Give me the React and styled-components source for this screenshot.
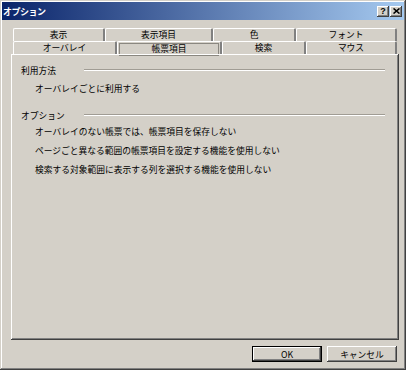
import styled, { createGlobalStyle } from "styled-components";

const GlobalStyle = createGlobalStyle`
  html, body {
    margin: 0;
    padding: 0;
    background: #fff;
  }
  body {
    font-family: "Noto Sans CJK JP", "Noto Sans", sans-serif;
    font-size: 8.75px;
    color: #000;
  }
`;

const raised = `
  box-shadow: inset -1px -1px #404040, inset 1px 1px #fff,
    inset -2px -2px #808080, inset 2px 2px #d4d0c8;
`;

const topTabs = [
    { label: "表示", width: 92 },
    { label: "表示項目", width: 108 },
    { label: "色", width: 83 },
    { label: "フォント", width: 101 },
];

const frontTabs = [
    { label: "オーバレイ", width: 104 },
    { label: "帳票項目", width: 105, active: true },
    { label: "検索", width: 84 },
    { label: "マウス", width: 91 },
];

const options = [
    "オーバレイのない帳票では、帳票項目を保存しない",
    "ページごと異なる範囲の帳票項目を設定する機能を使用しない",
    "検索する対象範囲に表示する列を選択する機能を使用しない",
];

function App() {
    return (
        <>
            <GlobalStyle />
            <Window>
                <TitleBar>
                    <Title>オプション</Title>
                    <TitleButtons>
                        <TitleButton>?</TitleButton>
                        <TitleButton>
                            <svg width="7" height="6" viewBox="0 0 7 6">
                                <path d="M0.5 0.5 L6.5 5.5 M6.5 0.5 L0.5 5.5" stroke="#000" strokeWidth="1.6" />
                            </svg>
                        </TitleButton>
                    </TitleButtons>
                </TitleBar>

                <Content>
                    <TabStrip>
                        <TabRow>
                            {topTabs.map((t) => (
                                <Tab key={t.label} width={t.width}>{t.label}</Tab>
                            ))}
                        </TabRow>
                        <TabRow>
                            {frontTabs.map((t) => (
                                <Tab key={t.label} width={t.width} active={t.active}>
                                    {t.active ? <Focus>{t.label}</Focus> : t.label}
                                </Tab>
                            ))}
                        </TabRow>
                    </TabStrip>

                    <Panel>
                        <GroupHeader>
                            <GroupLabel>利用方法</GroupLabel>
                            <Etch />
                        </GroupHeader>
                        <Item first>オーバレイごとに利用する</Item>

                        <GroupHeader gap>
                            <GroupLabel>オプション</GroupLabel>
                            <Etch />
                        </GroupHeader>
                        {options.map((o) => (
                            <Item key={o}>{o}</Item>
                        ))}
                    </Panel>

                    <Footer>
                        <Button primary>OK</Button>
                        <Button>キャンセル</Button>
                    </Footer>
                </Content>
            </Window>
        </>
    );
}

const Window = styled.div`
    width: 406px;
    height: 370px;
    box-sizing: border-box;
    padding: 2px;
    background: #d4d0c8;
    display: flex;
    flex-direction: column;
    box-shadow: inset -1px -1px #404040, inset 1px 1px #d4d0c8,
        inset -2px -2px #808080, inset 2px 2px #fff;
`;

const TitleBar = styled.div`
    height: 18px;
    background: linear-gradient(to right, #0a246a, #a6caf0);
    display: flex;
    align-items: center;
    justify-content: space-between;
    padding: 0 2px 0 1px;
`;

const Title = styled.div`
    color: #fff;
    font-weight: bold;
    font-size: 9px;
    letter-spacing: -0.5px;
`;

const TitleButtons = styled.div`
    display: flex;
    gap: 1px;
`;

const TitleButton = styled.div`
    width: 12px;
    height: 11px;
    background: #d4d0c8;
    ${raised}
    display: flex;
    align-items: center;
    justify-content: center;
    font-family: "Liberation Sans", sans-serif;
    font-weight: bold;
    font-size: 9px;
    line-height: 1;
`;

const Content = styled.div`
    flex: 1;
    display: flex;
    flex-direction: column;
    padding: 8px 5px 6px 9px;
`;

const TabStrip = styled.div`
    margin: 0 1px 0 2px;
    display: flex;
    flex-direction: column;
`;

const TabRow = styled.div`
    display: flex;
    height: 13px;
`;

const Tab = styled.div`
    width: ${(p) => p.width}px;
    box-sizing: border-box;
    border-top: 1px solid #fff;
    border-left: 1px solid #fff;
    border-right: 2px solid #808080;
    border-top-left-radius: 2px;
    border-top-right-radius: 2px;
    display: flex;
    justify-content: center;
    align-items: flex-start;
    line-height: 12px;
    padding: ${(p) => (p.active ? "0 1px" : "0")};
`;

const Focus = styled.div`
    flex: 1;
    height: 11px;
    margin-top: 1px;
    border: 1px solid #8a8780;
    text-align: center;
    line-height: 9px;
`;

const Panel = styled.div`
    flex: 1;
    box-sizing: border-box;
    padding: 9px 14px 0 10px;
    box-shadow: inset -1px -1px #404040, inset 1px 1px #fff,
        inset -2px -2px #808080;
`;

const GroupHeader = styled.div`
    display: flex;
    align-items: center;
    height: 14px;
    margin-top: ${(p) => (p.gap ? "10px" : "0")};
`;

const GroupLabel = styled.div`
    width: 63px;
    flex-shrink: 0;
`;

const Etch = styled.div`
    flex: 1;
    border-top: 1px solid #a09c94;
    border-bottom: 1px solid #fff;
`;

const Item = styled.div`
    padding-left: 14px;
    height: 19px;
    line-height: 19px;
    margin-top: ${(p) => (p.first ? "2px" : "0")};
`;

const Footer = styled.div`
    display: flex;
    justify-content: flex-end;
    gap: 5px;
    margin: 6px 2px 0 0;
`;

const Button = styled.div`
    width: 70px;
    height: 16px;
    box-sizing: border-box;
    background: #d4d0c8;
    display: flex;
    align-items: center;
    justify-content: center;
    ${(p) =>
        p.primary
            ? `box-shadow: inset 0 0 0 1px #000, inset -2px -2px #404040,
                inset 2px 2px #fff, inset -3px -3px #808080;`
            : raised}
`;

export default App;
